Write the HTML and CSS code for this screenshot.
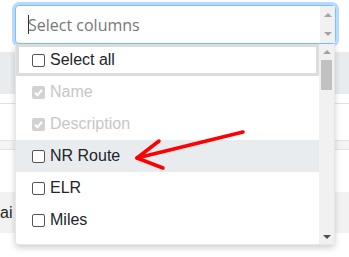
FILE: index.html
```html
<!DOCTYPE html>
<html lang="en">

<head>
    <meta charset="UTF-8">
    <meta name="viewport" content="width=device-width, initial-scale=1.0">
    <title>Select columns</title>
    <link rel="stylesheet" href="styles.css">
</head>

<body>
    <div class="page">
        <!-- Column picker -->
        <div class="picker">
            <div class="picker-input">
                <div class="field">
                    <span class="caret"></span>
                    <span class="placeholder">Select columns</span>
                </div>
                <div class="mini-scroll">
                    <span class="tri up light"></span>
                    <span class="tri down light"></span>
                </div>
            </div>

            <div class="menu">
                <div class="options">
                    <div class="opt opt-all"><span class="box"></span>Select all</div>
                    <div class="opt disabled">
                        <span class="box off"><svg viewBox="0 0 13 13" width="13" height="13"><path d="M3 6.8 L5.4 9.2 L10 3.8" fill="none" stroke="#fff" stroke-width="2"/></svg></span>Name
                    </div>
                    <div class="opt disabled">
                        <span class="box off"><svg viewBox="0 0 13 13" width="13" height="13"><path d="M3 6.8 L5.4 9.2 L10 3.8" fill="none" stroke="#fff" stroke-width="2"/></svg></span>Description
                    </div>
                    <div class="opt hover"><span class="box"></span>NR Route</div>
                    <div class="opt"><span class="box"></span>ELR</div>
                    <div class="opt"><span class="box"></span>Miles</div>
                </div>
                <div class="vscroll">
                    <div class="sb-btn"><span class="tri up light"></span></div>
                    <div class="thumb"></div>
                    <div class="sb-fill"></div>
                    <div class="sb-btn"><span class="tri down"></span></div>
                </div>
            </div>
        </div>

        <!-- Table behind the dropdown -->
        <div class="grid">
            <div class="gap"></div>
            <div class="thead"></div>
            <div class="row r1"></div>
            <div class="row r2"></div>
            <div class="band"></div>
            <div class="row r3"></div>
            <div class="row r4">ai</div>
        </div>

        <!-- Annotation arrow -->
        <svg class="arrow" width="349" height="257" viewBox="0 0 349 257">
            <g stroke="#ff0000" stroke-width="3.5" stroke-linecap="round" fill="none">
                <line x1="243" y1="132" x2="137" y2="158" />
                <line x1="137" y1="158" x2="159" y2="141" />
                <line x1="137" y1="158" x2="163" y2="168" />
            </g>
        </svg>
    </div>
</body>

</html>
```

FILE: styles.css
```css
/* Base */
body {
    margin: 0;
    font-family: "Liberation Sans", Arial, sans-serif;
    background: #fff;
    color: #212529;
}

.page {
    position: relative;
    width: 349px;
    height: 257px;
    overflow: hidden;
}

/* Picker input */
.picker {
    position: relative;
    z-index: 2;
    margin: 5px 13px 0 15px;
}

.picker-input {
    display: flex;
    height: 39px;
    box-sizing: border-box;
    border: 1px solid #80bdff;
    border-radius: 4px;
    background: #fff;
    box-shadow: 0 0 0 3px rgba(0, 123, 255, 0.28);
}

.field {
    flex: 1;
    display: flex;
    align-items: center;
    padding-left: 12px;
}

.caret {
    width: 1px;
    height: 19px;
    margin-right: -1px;
    background: #333;
}

.placeholder {
    font-family: "Open Sans", sans-serif;
    font-size: 16px;
    color: #777;
}

.mini-scroll {
    width: 15px;
    background: #f1f1f1;
    display: flex;
    flex-direction: column;
    align-items: center;
    justify-content: center;
    gap: 15px;
}

.tri {
    width: 0;
    height: 0;
    border-left: 4px solid transparent;
    border-right: 4px solid transparent;
}

.tri.up {
    border-bottom: 4px solid #505050;
}

.tri.down {
    border-top: 4px solid #505050;
}

.tri.up.light {
    border-bottom-color: #a3a3a3;
}

.tri.down.light {
    border-top-color: #a3a3a3;
}

/* Dropdown */
.menu {
    position: absolute;
    top: 39px;
    left: 0;
    width: 320px;
    height: 201px;
    box-sizing: border-box;
    display: flex;
    background: #fff;
    border: 1px solid #e6e6e6;
    border-top: none;
    border-radius: 0 0 4px 4px;
    box-shadow: 0 3px 6px rgba(0, 0, 0, 0.18);
    z-index: 3;
}

.options {
    flex: 1;
}

.opt {
    display: flex;
    align-items: center;
    height: 32px;
    box-sizing: border-box;
    padding-left: 16px;
    font-size: 16px;
}

.opt-all {
    border: 3px solid #dcdcdc;
    padding-left: 13px;
}

.opt.hover {
    background: #e9ecef;
}

.opt.disabled {
    color: #c6c6c6;
}

.box {
    width: 13px;
    height: 13px;
    box-sizing: border-box;
    margin-right: 5px;
    border: 1px solid #555;
    border-radius: 2px;
    background: #fff;
    display: flex;
}

.box.off {
    border: none;
    background: #d2d2d2;
}

.vscroll {
    width: 15px;
    display: flex;
    flex-direction: column;
    background: #f1f1f1;
}

.sb-btn {
    height: 15px;
    display: flex;
    align-items: center;
    justify-content: center;
}

.thumb {
    height: 30px;
    margin: 1px 2px 0;
    background: #c1c1c1;
}

.sb-fill {
    flex: 1;
}

/* Table behind */
.grid {
    font-size: 16px;
}

.gap {
    height: 8px;
}

.thead {
    height: 42px;
    background: #e9ecef;
}

.row {
    box-sizing: border-box;
}

.r1 {
    height: 10px;
    border-bottom: 1px solid #dee2e6;
}

.r2 {
    height: 36px;
}

.band {
    height: 10px;
    box-sizing: border-box;
    background: #f3f4f6;
    border-top: 1px solid #e3e6e8;
    border-bottom: 1px solid #e3e6e8;
}

.r3 {
    height: 42px;
}

.r4 {
    height: 41px;
    background: #f2f2f2;
    display: flex;
    align-items: center;
}

/* Annotation */
.arrow {
    position: absolute;
    top: 0;
    left: 0;
    z-index: 5;
}
```
